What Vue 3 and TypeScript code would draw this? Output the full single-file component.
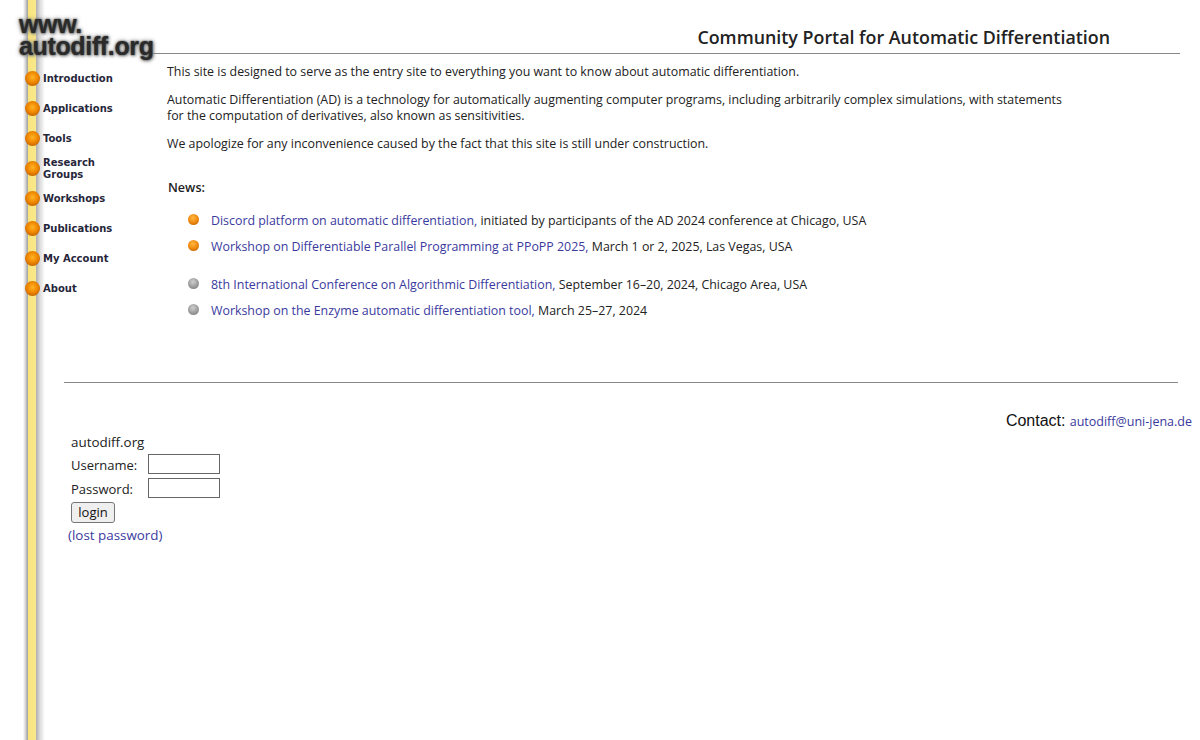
<script setup lang="ts">
const nav = ['Introduction', 'Applications', 'Tools', 'Research Groups', 'Workshops', 'Publications', 'My Account', 'About']
const news = [
  { link: 'Discord platform on automatic differentiation,', rest: ' initiated by participants of the AD 2024 conference at Chicago, USA', old: false },
  { link: 'Workshop on Differentiable Parallel Programming at PPoPP 2025,', rest: ' March 1 or 2, 2025, Las Vegas, USA', old: false },
  { link: '8th International Conference on Algorithmic Differentiation,', rest: ' September 16–20, 2024, Chicago Area, USA', old: true },
  { link: 'Workshop on the Enzyme automatic differentiation tool,', rest: ' March 25–27, 2024', old: true },
]
</script>

<template>
  <div class="page">
    <div class="logo">www.<br />autodiff.org</div>
    <div class="top">
      <nav class="nav">
        <a v-for="n in nav" :key="n" class="nav-item" href="#">
          <span class="ball"></span>
          <span class="nav-label">{{ n }}</span>
        </a>
      </nav>
      <main class="main">
        <h1 class="title">Community Portal for Automatic Differentiation</h1>
        <div class="body">
          <p>This site is designed to serve as the entry site to everything you want to know about automatic differentiation.</p>
          <p>Automatic Differentiation (AD) is a technology for automatically augmenting computer programs, including arbitrarily complex simulations, with statements<br />for the computation of derivatives, also known as sensitivities.</p>
          <p>We apologize for any inconvenience caused by the fact that this site is still under construction.</p>
          <h2 class="news-h">News:</h2>
          <ul class="news">
            <li v-for="(item, i) in news" :key="i" :class="{ gap: i === 2 }">
              <span class="dot" :class="{ old: item.old }"></span>
              <span><a href="#">{{ item.link }}</a>{{ item.rest }}</span>
            </li>
          </ul>
        </div>
      </main>
    </div>
    <div class="foot">
      <hr class="rule" />
      <div class="contact"><span class="c-label">Contact:</span> <a href="#">autodiff@uni-jena.de</a></div>
      <form class="login" @submit.prevent>
        <div class="site">autodiff.org</div>
        <label class="row"><span class="lbl">Username:</span><input class="inp" type="text" /></label>
        <label class="row"><span class="lbl">Password:</span><input class="inp" type="password" /></label>
        <button class="btn" type="submit">login</button>
        <a class="lost" href="#">(lost password)</a>
      </form>
    </div>
  </div>
</template>

<style scoped>
.page {
  position: relative;
  height: 740px;
  overflow: hidden;
  box-sizing: border-box;
  font-family: "Open Sans", "Noto Sans", sans-serif;
  font-size: 12.4px;
  color: #222;
  background: linear-gradient(to right,
    #fff 23px, #ddd 25px, #a8a8a8 27.5px, #f9e47c 28.2px, #f9e88c 35.6px, #b0b0b0 36.2px, #dcdcdc 40px, #fff 45px);
}
a { color: #3a3a9e; text-decoration: none; }
.logo {
  position: absolute;
  left: 19px;
  top: 13px;
  font: bold 25px/22px "Liberation Sans", sans-serif;
  letter-spacing: -0.35px;
  color: #2a2a2a;
  text-shadow: 0 0 2px #444, 0 0 5px #888, 1px 1px 3px #999;
}
.top { display: flex; height: 382px; }
.nav {
  width: 142px;
  padding: 63px 0 0 25px;
  flex: none;
  display: flex;
  flex-direction: column;
}
.nav-item {
  height: 30px;
  display: flex;
  align-items: center;
  gap: 3px;
  color: #223;
}
.ball {
  width: 15px;
  height: 15px;
  flex: none;
  border-radius: 50%;
  background: radial-gradient(circle at 50% 42%, #ffb428 0, #f28a00 42%, #cc6a00 72%, #7d4206 100%);
}
.nav-label {
  width: 85px;
  margin-top: 2px;
  font: bold 10px/12px "DejaVu Sans", Verdana, sans-serif;
  color: #26263a;
}
.main { flex: 1; min-width: 0; }
.title {
  margin: 0 20px 0 -17px;
  padding: 25px 70px 3px 0;
  height: 25px;
  text-align: right;
  font-size: 17.85px;
  line-height: 25px;
  font-weight: 600;
  color: #222;
  border-bottom: 1px solid #888;
}
.body { padding: 10px 130px 0 0; line-height: 16px; }
.body p { margin: 0 0 12px; }
.news-h { margin: 28px 0 0 1px; font-size: 12.6px; line-height: 16px; font-weight: 600; }
.news { list-style: none; margin: 16px 0 0; padding: 0 0 0 21px; }
.news li { display: flex; gap: 12px; height: 26px; line-height: 18px; }
.news li.gap { margin-top: 12px; }
.dot {
  width: 11px;
  height: 11px;
  margin-top: 2px;
  flex: none;
  border-radius: 50%;
  background: radial-gradient(circle at 45% 35%, #ffb840 0, #f08a10 50%, #a85800 100%);
}
.dot.old { background: radial-gradient(circle at 45% 35%, #cfcfcf 0, #a0a0a0 50%, #707070 100%); }
.foot { padding-left: 64px; }
.rule { margin: 0 22px 0 0; border: 0; border-top: 1px solid #888; }
.contact { margin: 29px 8px 0 0; text-align: right; line-height: 20px; font-size: 12.5px; }
.c-label { font: 16px "Liberation Sans", sans-serif; color: #111; margin-right: 1px; }
.login { display: flex; flex-direction: column; align-items: flex-start; padding: 0 0 0 7px; font-size: 13.4px; }
.site { line-height: 20px; }
.row { display: flex; align-items: center; height: 24px; }
.lbl { width: 77px; font-size: 13px; margin-top: 2px; }
.inp { width: 72px; height: 20px; box-sizing: border-box; border: 1px solid #666; padding: 0; background: #fff; }
.btn { margin-top: 2px; height: 21px; width: 44px; padding: 0 0 2px; font: 13px "Open Sans", sans-serif; color: #111; background: #efefef; border: 1px solid #767676; border-radius: 3px; }
.lost { margin: 2px 0 0 -3px; line-height: 20px; }
</style>
